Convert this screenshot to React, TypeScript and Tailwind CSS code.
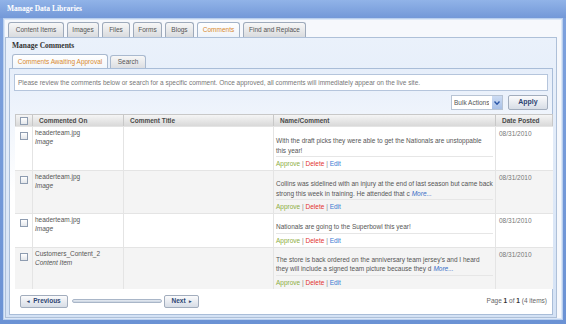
import React from "react";

const rows = [
  {
    name: "headerteam.jpg",
    type: "Image",
    lines: ["With the draft picks they were able to get the Nationals are unstoppable", "this year!"],
    more: false,
    bg: "bg-white",
    pt: "pt-[9px]",
  },
  {
    name: "headerteam.jpg",
    type: "Image",
    lines: [
      "Collins was sidelined with an injury at the end of last season but came back",
      "strong this week in training. He attended that c",
    ],
    more: true,
    bg: "bg-[#f4f4f4]",
    pt: "pt-[8px]",
  },
  {
    name: "headerteam.jpg",
    type: "Image",
    lines: ["Nationals are going to the Superbowl this year!"],
    more: false,
    bg: "bg-white",
    pt: "pt-[8px]",
  },
  {
    name: "Customers_Content_2",
    type: "Content Item",
    lines: [
      "The store is back ordered on the anniversary team jersey's and I heard",
      "they will include a signed team picture because they d",
    ],
    more: true,
    bg: "bg-[#f4f4f4]",
    pt: "pt-[7px]",
  },
];

function Check() {
  return (
    <div className="w-[8px] h-[8px] border border-[#8e9cb0] bg-gradient-to-b from-white to-[#e3e6ea]" />
  );
}

const tabs: [string, string][] = [
  ["Content Items", "w-[56px]"],
  ["Images", "w-[32px]"],
  ["Files", "w-[28px]"],
  ["Forms", "w-[29px]"],
  ["Blogs", "w-[29px]"],
  ["Comments", "w-[43px]"],
  ["Find and Replace", "w-[63px]"],
];

export default function App() {
  return (
    <div className="w-[566px] h-[324px] bg-gradient-to-b from-[#7ea2de] to-[#6b92d4] flex flex-col font-['Liberation_Sans',sans-serif] text-[6.5px] text-[#666] overflow-hidden">
      <div className="h-[18px] shrink-0 px-[7px] flex items-center text-white font-bold text-[7.5px] font-['Liberation_Serif',serif] bg-gradient-to-b from-[#91b3e8] to-[#7398d8]">
        Manage Data Libraries
      </div>
      <div className="flex-1 mx-[3px] mb-[4px] border border-[#b9cfee] bg-[#dbe7f7] p-[1px] flex flex-col">
        <div className="flex-1 bg-[#f6f8fc] flex flex-col">
          <div className="h-[17px] shrink-0 flex items-end gap-[3px] pl-[3px]">
            {tabs.map(([t, w]) => (
              <div
                key={t}
                className={
                  w +
                  " h-[15px] flex items-center justify-center whitespace-nowrap rounded-t-[3px] border border-b-0 " +
                  (t === "Comments"
                    ? "bg-gradient-to-b from-white to-[#eef3fa] border-[#a3b3c8] text-[#d88a2e]"
                    : "bg-gradient-to-b from-[#f7f7f7] to-[#d9dbde] border-[#9eaabb] text-[#555]")
                }
              >
                {t}
              </div>
            ))}
          </div>
          <div className="flex-1 mr-[4px] border border-[#aec0d8] bg-gradient-to-b from-[#eaf1fb] to-[#d4e2f5] flex flex-col">
            <div className="h-[16px] shrink-0 pl-[6px] flex items-center font-bold text-[#333] text-[7.5px] font-['Liberation_Serif',serif]">
              Manage Comments
            </div>
            <div className="h-[14px] shrink-0 flex items-end gap-[2px] pl-[6px]">
              <div className="w-[96px] h-[14px] flex items-center justify-center whitespace-nowrap rounded-t-[3px] border border-b-0 border-[#a9b9cf] bg-gradient-to-b from-white to-[#f2f6fb] text-[#d88a2e]">
                Comments Awaiting Approval
              </div>
              <div className="w-[36px] h-[13px] flex items-center justify-center rounded-t-[3px] border border-b-0 border-[#a9b9cf] bg-gradient-to-b from-[#f7f7f7] to-[#dcdee2] text-[#555]">
                Search
              </div>
            </div>
            <div className="flex-1 mx-[3px] mb-[2px] border border-[#a9bdd8] bg-gradient-to-b from-[#e6eefa] via-white to-white flex flex-col px-[4px] pt-[5px]">
              <div className="h-[17px] shrink-0 border border-[#b5c5dc] bg-white flex items-center px-[3px] text-[#777]">
                Please review the comments below or search for a specific comment. Once approved, all comments will immediately appear on the live site.
              </div>
              <div className="h-[23px] shrink-0 flex items-center justify-end gap-[5px]">
                <div className="w-[52px] h-[15px] border border-[#b8c4d4] bg-white flex items-center pl-[2px] justify-between">
                  <span className="text-[#555] whitespace-nowrap overflow-hidden">Bulk Actions</span>
                  <div className="w-[10px] h-[13px] bg-gradient-to-b from-[#cddcf3] to-[#a8c0e6] flex items-center justify-center">
                    <svg width="6" height="4" viewBox="0 0 6 4">
                      <path d="M0.5 0.5 L3 3.2 L5.5 0.5" stroke="#2a56a8" strokeWidth="1.4" fill="none" />
                    </svg>
                  </div>
                </div>
                <div className="w-[40px] h-[15px] rounded-[2px] border border-[#a2adbd] bg-gradient-to-b from-[#fbfbfc] to-[#d7dde6] flex items-center justify-center font-bold text-[#2d4572] text-[7px]">
                  Apply
                </div>
              </div>
              <div className="grid grid-cols-[17px_91px_150px_222px_58px] mx-[1px]">
                <div className="h-[12px] border-l border-t border-[#c8c8c8] bg-gradient-to-b from-[#f5f5f5] to-[#d9d9d9] flex items-center justify-center">
                  <Check />
                </div>
                {["Commented On", "Comment Title", "Name/Comment", "Date Posted"].map((h, i) => (
                  <div
                    key={h}
                    className={
                      "h-[12px] border-l border-t border-[#c8c8c8] bg-gradient-to-b from-[#f5f5f5] to-[#d9d9d9] flex items-center font-bold text-[#4a4a4a] text-[6.5px] " +
                      (i === 3 ? "pl-[6px] border-r" : "pl-[6px]")
                    }
                  >
                    {h}
                  </div>
                ))}
                {rows.map((r, idx) => (
                  <React.Fragment key={idx}>
                    <div className={r.bg + " flex justify-center pt-[5px] border-t border-[#e4e4e4]"}>
                      <Check />
                    </div>
                    <div className={r.bg + " border-l border-t border-[#e4e4e4] px-[2px] pt-[1px] leading-[9px]"}>
                      <div className="text-[#555]">{r.name}</div>
                      <div className="italic text-[#555]">{r.type}</div>
                    </div>
                    <div className={r.bg + " border-l border-t border-[#e4e4e4]"} />
                    <div className={r.bg + " border-l border-t border-[#e4e4e4] px-[2px] " + r.pt}>
                      <div className="border-b border-[#e6e6e6] pb-[1px] leading-[9.5px] text-[#555]">
                        {r.lines.map((l, li) => (
                          <div key={li} className="flex whitespace-nowrap">
                            <span>{l}</span>
                            {r.more && li === r.lines.length - 1 && (
                              <span className="ml-[2px] italic text-[#3a6fc7]">More...</span>
                            )}
                          </div>
                        ))}
                      </div>
                      <div className="pt-[2px] pb-[2px] leading-[9px]">
                        <span className="text-[#8eae3e]">Approve</span>
                        <span className="text-[#888]"> | </span>
                        <span className="text-[#e2322f]">Delete</span>
                        <span className="text-[#888]"> | </span>
                        <span className="text-[#3a79d2]">Edit</span>
                      </div>
                    </div>
                    <div className={r.bg + " border-l border-t border-[#e4e4e4] px-[3px] pt-[2px] leading-[9px] text-[#777]"}>
                      08/31/2010
                    </div>
                  </React.Fragment>
                ))}
              </div>
              <div className="flex-1 flex items-center pl-[6px] pr-[1px]">
                <div className="w-[48px] h-[13px] rounded-[2px] border border-[#a2adbd] bg-gradient-to-b from-[#fbfbfc] to-[#d7dde6] flex items-center justify-center gap-[3px] font-bold text-[#2d4572] text-[6.5px]">
                  <span className="text-[5px]">◂</span>Previous
                </div>
                <div className="w-[90px] h-[4px] ml-[4px] rounded-full border border-[#a9b6c8] bg-gradient-to-b from-[#e6ebf2] to-[#c9d3e0]" />
                <div className="w-[35px] h-[13px] ml-[2px] rounded-[2px] border border-[#a2adbd] bg-gradient-to-b from-[#fbfbfc] to-[#d7dde6] flex items-center justify-center gap-[3px] font-bold text-[#2d4572] text-[6.5px]">
                  Next<span className="text-[5px]">▸</span>
                </div>
                <div className="ml-auto text-[#666]">
                  Page <b className="text-[#333]">1</b> of <b className="text-[#333]">1</b> (4 items)
                </div>
              </div>
            </div>
          </div>
        </div>
      </div>
    </div>
  );
}
